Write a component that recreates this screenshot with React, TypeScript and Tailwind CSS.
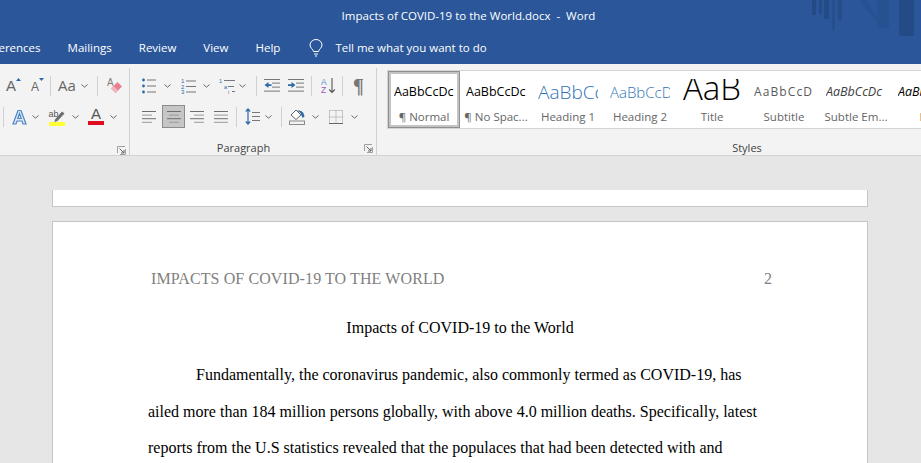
import type { ReactNode } from "react";

const UI = "font-['Open_Sans','Noto_Sans',sans-serif]";

const BOX = "mt-[4px] h-[30px] items-end";

const STYLES = [
  { sample: "AaBbCcDc", label: "¶ Normal", cls: "text-[12.5px] leading-[26px] text-black", box: "mt-[1px] h-[30px] w-[59px] items-end", selected: true },
  { sample: "AaBbCcDc", label: "¶ No Spac...", cls: "text-[12.5px] leading-[26px] text-black", box: BOX },
  { sample: "AaBbCc", label: "Heading 1", cls: "text-[19px] font-light leading-[26px] text-[#2e74b5]", box: BOX },
  { sample: "AaBbCcD", label: "Heading 2", cls: "text-[15px] font-light leading-[26px] text-[#2e74b5]", box: BOX },
  { sample: "AaB", label: "Title", cls: "ml-[1px] text-[33px] font-light leading-[17px] text-black", box: "mt-[8px] h-[26px] items-start" },
  { sample: "AaBbCcD", label: "Subtitle", cls: "text-[12px] tracking-[1.1px] leading-[26px] text-[#5a5a5a]", box: BOX },
  { sample: "AaBbCcDc", label: "Subtle Em...", cls: "text-[12.5px] italic leading-[26px] text-[#404040]", box: BOX },
  { sample: "AaBbCcDc", label: "Em", cls: "text-[12.5px] italic leading-[26px] text-black", box: BOX },
];

function Chevron({ className = "" }: { className?: string }) {
  return (
    <svg width="7" height="4" viewBox="0 0 7 4" className={className}>
      <path d="M0.5 0.5 3.5 3.2 6.5 0.5" fill="none" stroke="#666" strokeWidth="1" />
    </svg>
  );
}

function Sep({ className = "" }: { className?: string }) {
  return <div className={`h-[20px] w-px shrink-0 bg-[#d0d0d0] ${className}`} />;
}

function Launcher() {
  return (
    <svg width="9" height="9" viewBox="0 0 9 9">
      <path d="M0.5 7V0.5H8M8.5 3V8.5H3" fill="none" stroke="#a0a0a0" />
      <path d="M2.5 2.5 7 7M7 4V7H4" fill="none" stroke="#666" />
    </svg>
  );
}

function Lines({ rows, className = "" }: { rows: [number, number][]; className?: string }) {
  return (
    <svg width="15" height="14" viewBox="0 0 15 14" className={className}>
      {rows.map(([x, w], i) => (
        <rect key={i} x={x} y={1 + i * 3.6} width={w} height="1" fill={i % 2 ? "#9a9a9a" : "#6e6e6e"} />
      ))}
    </svg>
  );
}

function Bullets() {
  return (
    <svg width="14" height="16" viewBox="0 0 14 16">
      {[2, 8, 14].map((y) => (
        <g key={y}>
          <circle cx="1.5" cy={y} r="1.4" fill="#2b6aa8" />
          <rect x="5" y={y - 0.5} width="9" height="1" fill="#777" />
        </g>
      ))}
    </svg>
  );
}

function Numbered() {
  return (
    <svg width="15" height="16" viewBox="0 0 15 16" fontFamily="Liberation Sans" fontSize="6" fill="#2b6aa8">
      {[1, 2, 3].map((n, i) => (
        <g key={n}>
          <text x="0" y={5 + i * 5.5}>{n}</text>
          <rect x="5" y={2.5 + i * 5.5} width="10" height="1" fill="#777" />
        </g>
      ))}
    </svg>
  );
}

function Multilevel() {
  return (
    <svg width="17" height="16" viewBox="0 0 17 16" fontFamily="Liberation Sans" fontSize="5.5" fill="#2b6aa8">
      <text x="0" y="5">1</text>
      <rect x="5" y="2" width="11" height="1" fill="#777" />
      <text x="5" y="10.5">a</text>
      <rect x="9" y="8" width="6" height="1" fill="#777" />
      <text x="9" y="15.5" fill="#777">i</text>
      <rect x="13" y="13" width="3" height="1" fill="#777" />
    </svg>
  );
}

function Indent({ flip }: { flip?: boolean }) {
  return (
    <svg width="16" height="13" viewBox="0 0 16 13">
      <rect x="0" y="0" width="16" height="1" fill="#777" />
      <rect x="8" y="3.6" width="8" height="1" fill="#777" />
      <rect x="8" y="7.6" width="8" height="1" fill="#777" />
      <rect x="0" y="11.6" width="16" height="1" fill="#777" />
      <path d={flip ? "M0 5.2H3.5V3L7.5 6 3.5 9V7H0Z" : "M0.5 6 4.5 3V5.2H7.5V7H4.5V9Z"} fill="#2b6aa8" />
    </svg>
  );
}

function SortIcon() {
  return (
    <svg width="15" height="17" viewBox="0 0 15 17" fontFamily="Liberation Sans" fontSize="8.5">
      <text x="0" y="7.5" fill="#5b8fc7">A</text>
      <text x="0" y="16" fill="#9a5cb4">Z</text>
      <path d="M11 1V15.5M8.2 12.5 11 15.5 13.8 12.5" fill="none" stroke="#555" strokeWidth="1.1" />
    </svg>
  );
}

function LineSpacing() {
  return (
    <svg width="15" height="17" viewBox="0 0 15 17">
      <path d="M3 1V16M0.8 3.5 3 1 5.2 3.5M0.8 13.5 3 16 5.2 13.5" fill="none" stroke="#2b6aa8" strokeWidth="1.2" />
      <rect x="7" y="4" width="8" height="1" fill="#777" />
      <rect x="7" y="8" width="8" height="1" fill="#777" />
      <rect x="7" y="12" width="8" height="1" fill="#777" />
    </svg>
  );
}

function Shading() {
  return (
    <svg width="17" height="16" viewBox="0 0 17 16">
      <path d="M7 1 2 6 7 10.5 12 6Z" fill="#fff" stroke="#666" />
      <path d="M8 1.5C12 1 15 3 15.5 7.5L13.5 9 11.5 4Z" fill="#2b6aa8" />
      <rect x="0.5" y="12" width="15" height="3.5" fill="#f3f3f3" stroke="#8a8a8a" />
    </svg>
  );
}

function Borders() {
  return (
    <svg width="14" height="14" viewBox="0 0 14 14">
      <path d="M0.5 0.5H13.5V13.5M0.5 0.5V13.5M7 0.5V13.5M0.5 7H13.5" fill="none" stroke="#999" strokeDasharray="1 1" />
      <path d="M0 13.5H14" stroke="#666" />
    </svg>
  );
}

function Eraser() {
  return (
    <svg width="15" height="17" viewBox="0 0 15 17">
      <text x="0" y="9" fontFamily="Liberation Sans" fontSize="10" fill="#7f7f7f">A</text>
      <path d="M4 11.5 10.5 5 15 9.5 8.5 16Z" fill="#e8808f" />
      <path d="M4 11.5 6.5 9 11 13.5 8.5 16Z" fill="#f2b6bf" />
    </svg>
  );
}

function OutlineA() {
  return (
    <svg width="15" height="16" viewBox="0 0 15 16">
      <path d="M1 15 6 1.5H9L14 15H11L10 12H5L4 15ZM5.8 9.5H9.2L7.5 4.5Z" fill="#dbe7f4" stroke="#4a86c5" strokeWidth="1.2" />
    </svg>
  );
}

function Highlighter() {
  return (
    <svg width="18" height="18" viewBox="0 0 18 18">
      <text x="0.5" y="8.5" fontFamily="Liberation Sans" fontSize="9" fill="#555">ab</text>
      <path d="M7 11.5 14 3.5 16.5 5.5 9.5 13 6.5 14Z" fill="#6e6e6e" />
      <rect x="1" y="14" width="16" height="4" fill="#ffff33" />
    </svg>
  );
}

function RedA() {
  return (
    <div className="flex w-[16px] flex-col items-center">
      <span className="font-['Liberation_Sans',sans-serif] text-[15px] leading-[12px] text-[#555]">A</span>
      <div className="mt-[1px] h-[4px] w-[16px] bg-[#e00b1c]" />
    </div>
  );
}

function Row({ children, className = "" }: { children: ReactNode; className?: string }) {
  return <div className={`flex h-[31px] items-center ${className}`}>{children}</div>;
}

function GroupFooter({ label }: { label?: string }) {
  return (
    <div className="mt-auto grid grid-cols-[1fr_auto_1fr] items-center pb-[1px] pr-[3px]">
      <span />
      <span className="mr-[16px] text-[11px] leading-[14px] text-[#444]">{label}</span>
      <span className="justify-self-end">
        <Launcher />
      </span>
    </div>
  );
}

function TitleBar() {
  return (
    <div className="relative flex h-[30px] items-center justify-center pl-[16px] pt-[1px] text-[11.5px] text-white">
      <span className="whitespace-pre">Impacts of COVID-19 to the World.docx  -  Word</span>
      <svg width="110" height="37" viewBox="0 0 110 37" className="absolute right-0 top-0" fill="#1f3f74">
        <rect x="1" width="4" height="15" opacity=".55" />
        <rect x="8" width="3" height="14" opacity=".45" />
        <rect x="13" width="5" height="19" opacity=".5" />
        <rect x="21" width="3" height="31" opacity=".3" />
        <rect x="27" width="4" height="20" opacity=".4" />
        <path d="M48 0H56L66 18V0H78V28H66V22Z" opacity=".22" />
        <rect x="88" width="15" height="36" opacity=".5" />
      </svg>
    </div>
  );
}

function TabRow() {
  return (
    <div className="flex h-[34px] items-center gap-[27px] pt-[2px] text-[11.5px] text-white">
      <span className="ml-[-19px]">References</span>
      <span>Mailings</span>
      <span>Review</span>
      <span>View</span>
      <span>Help</span>
      <div className="ml-[2px] flex items-center gap-[12px]">
        <svg width="14" height="18" viewBox="0 0 14 18" fill="none" stroke="#fff">
          <path d="M4.5 12.5C4 10 1 9 1 6A6 5.5 0 0 1 13 6C13 9 10 10 9.5 12.5Z" />
          <path d="M5 15H9M6 17H8" />
        </svg>
        <span>Tell me what you want to do</span>
      </div>
    </div>
  );
}

function FontGroup() {
  return (
    <div className="mt-[4px] flex h-[88px] w-[130px] shrink-0 flex-col border-r border-[#d0d0d0] pt-[2px] text-[#666]">
      <Row>
        <div className="ml-[6px] flex w-[15px] items-start">
          <span className="font-['Liberation_Sans',sans-serif] text-[15px] leading-none">A</span>
          <svg width="5" height="3" viewBox="0 0 5 3"><path d="M0 3 2.5 0 5 3Z" fill="#2b6aa8" /></svg>
        </div>
        <div className="ml-[10px] flex w-[14px] items-start">
          <span className="mt-[3px] font-['Liberation_Sans',sans-serif] text-[12px] leading-none">A</span>
          <svg width="5" height="3" viewBox="0 0 5 3"><path d="M0 0 2.5 3 5 0Z" fill="#2b6aa8" /></svg>
        </div>
        <Sep className="ml-[5px]" />
        <span className="ml-[7px] w-[16px] text-[15px] leading-none">Aa</span>
        <Chevron className="ml-[7px]" />
        <Sep className="ml-[9px]" />
        <div className="ml-[9px]"><Eraser /></div>
      </Row>
      <Row>
        <Sep className="ml-[3px]" />
        <div className="ml-[8px]"><OutlineA /></div>
        <Chevron className="ml-[5px]" />
        <div className="ml-[9px]"><Highlighter /></div>
        <Chevron className="ml-[6px]" />
        <div className="ml-[9px]"><RedA /></div>
        <Chevron className="ml-[6px]" />
      </Row>
      <GroupFooter />
    </div>
  );
}

function ParagraphGroup() {
  return (
    <div className="mt-[4px] flex h-[88px] w-[247px] shrink-0 flex-col border-r border-[#d0d0d0] pt-[2px]">
      <Row className="pl-[12px]">
        <Bullets />
        <Chevron className="ml-[8px]" />
        <div className="ml-[10px]"><Numbered /></div>
        <Chevron className="ml-[7px]" />
        <div className="ml-[9px]"><Multilevel /></div>
        <Chevron className="ml-[3px]" />
        <Sep className="ml-[10px]" />
        <div className="ml-[7px]"><Indent /></div>
        <div className="ml-[8px]"><Indent flip /></div>
        <Sep className="ml-[7px]" />
        <div className="ml-[9px]"><SortIcon /></div>
        <Sep className="ml-[6px]" />
        <span className="ml-[10px] font-['Liberation_Serif',serif] text-[20px] font-bold leading-none text-[#777]">¶</span>
      </Row>
      <Row className="pl-[12px]">
        <Lines rows={[[0, 14], [0, 10], [0, 14], [0, 10]]} />
        <div className="ml-[5px] flex h-[23px] w-[23px] items-center justify-center border border-[#8c8c8c] bg-[#c6c6c6]">
          <Lines rows={[[0, 14], [2, 10], [0, 14], [2, 10]]} className="ml-[1px]" />
        </div>
        <div className="ml-[5px]"><Lines rows={[[0, 14], [4, 10], [0, 14], [4, 10]]} /></div>
        <div className="ml-[9px]"><Lines rows={[[0, 14], [0, 14], [0, 14], [0, 14]]} /></div>
        <Sep className="ml-[7px]" />
        <div className="ml-[8px]"><LineSpacing /></div>
        <Chevron className="ml-[5px]" />
        <Sep className="ml-[9px]" />
        <div className="ml-[7px]"><Shading /></div>
        <Chevron className="ml-[6px]" />
        <div className="ml-[10px]"><Borders /></div>
        <Chevron className="ml-[8px]" />
      </Row>
      <GroupFooter label="Paragraph" />
    </div>
  );
}

function StylesGroup() {
  return (
    <div className="mt-[4px] flex h-[88px] w-[740px] shrink-0 flex-col pt-[2px]">
      <div className="ml-[10px] flex h-[59px] w-[740px] items-center overflow-hidden border-y border-l border-[#d4d4d4] bg-white">
        {STYLES.map((s) => (
          <div
            key={s.label}
            className={`flex h-[57px] w-[72px] shrink-0 flex-col items-center overflow-hidden ${
              s.selected ? "border-[3px] border-[#c4c4c4] outline outline-1 -outline-offset-1 outline-[#8f8f8f]" : ""
            }`}
          >
            <div className={`flex w-[60px] shrink-0 overflow-hidden ${s.box}`}>
              <span className={`whitespace-nowrap ${s.cls}`}>{s.sample}</span>
            </div>
            <span className="mt-[4px] whitespace-nowrap text-[11.5px] leading-[16px] text-[#666]">
              {s.label}
            </span>
          </div>
        ))}
      </div>
      <div className="mt-auto pb-[1px] text-center text-[11px] leading-[14px] text-[#444]">Styles</div>
    </div>
  );
}

function Pages() {
  return (
    <div className="flex-1 overflow-hidden bg-[#e6e6e6] pl-[52px] pr-[53px] pt-[34px] font-['Liberation_Serif',serif] text-[16px] text-black">
      <div className="h-[17px] border-x border-b border-[#c6c6c6] bg-white" />
      <div className="mt-[14px] h-[400px] border border-[#c6c6c6] bg-white px-[95px] pt-[45px]">
        <div className="flex justify-between text-[#7f7f7f]">
          <span className="pl-[3px] tracking-[0.1px]">IMPACTS OF COVID-19 TO THE WORLD</span>
          <span>2</span>
        </div>
        <p className="mt-[25px] text-center">Impacts of COVID-19 to the World</p>
        <p className="mt-[17px] indent-[48px] leading-[36.5px]">
          Fundamentally, the coronavirus pandemic, also commonly termed as COVID-19, has ailed more than 184 million persons globally, with above 4.0 million deaths. Specifically, latest reports from the U.S statistics revealed that the populaces that had been detected with and
        </p>
      </div>
    </div>
  );
}

export default function App() {
  return (
    <div className={`flex h-[463px] w-[921px] flex-col overflow-hidden ${UI}`}>
      <div className="bg-[#2b579a]">
        <TitleBar />
        <TabRow />
      </div>
      <div className="flex h-[92px] shrink-0 overflow-hidden border-b border-[#d2d2d2] bg-[#f3f3f3]">
        <FontGroup />
        <ParagraphGroup />
        <StylesGroup />
      </div>
      <Pages />
    </div>
  );
}
